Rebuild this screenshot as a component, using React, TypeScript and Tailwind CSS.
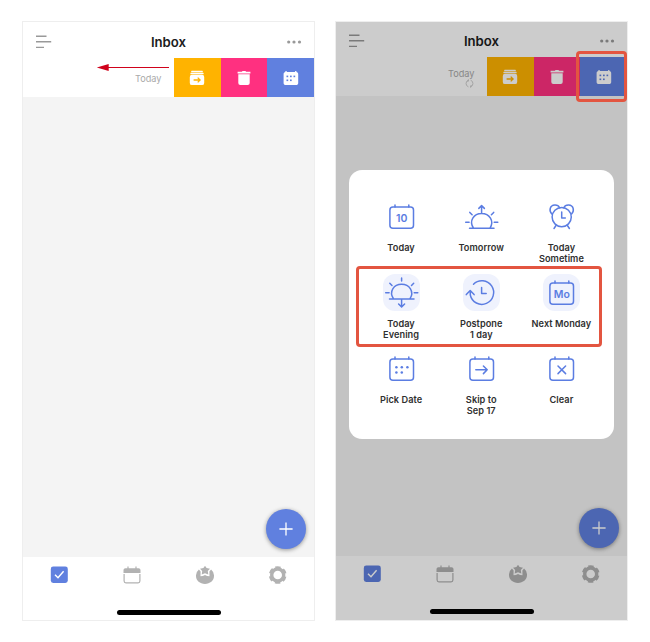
import React from "react";

const stroke = {
  fill: "none",
  stroke: "currentColor",
  strokeWidth: 1.5,
  strokeLinecap: "round" as const,
  strokeLinejoin: "round" as const,
};

function CalendarFrame() {
  return (
    <>
      <rect x="6.900" y="8.900" width="23.600" height="21.400" rx="3" />
      <path d="M12 7v2M25.800 7v2" />
    </>
  );
}

function CalendarText({ label }: { label: string }) {
  return (
    <svg width="37" height="37" viewBox="0 0 37 37" {...stroke}>
      <CalendarFrame />
      <text x="18.800" y="23.700" textAnchor="middle" fill="currentColor" stroke="none" fontSize="10.5" fontWeight="600" fontFamily="Inter, sans-serif">
        {label}
      </text>
    </svg>
  );
}

function Sunrise() {
  return (
    <svg width="37" height="37" viewBox="0 0 37 37" {...stroke}>
      <path d="M6.500 30.300h24.500M10.500 30.100C5.600 23 10.800 15.500 18.600 15.500S31.600 23 27 30.100M18.600 15V7.800M15.800 10.400l2.800-2.800 2.800 2.800M2.700 24.200h3.400M31.200 24.200h3.600M6.800 14.400l2.300 2.400M30.700 14.400l-2.300 2.400" />
    </svg>
  );
}

function Sunset() {
  return (
    <svg width="37" height="37" viewBox="0 0 37 37" {...stroke}>
      <path d="M6.500 24.900h24.500M10.500 24.700C5.600 17.600 10.800 10.300 18.600 10.300S31.600 17.600 27 24.700M18.600 25.200v7.600M15.600 30l3 3 3-3M18.600 4v3M2.700 18.800h3.400M31.200 18.800h3.600M6.800 9.200l2.200 2.300M30.700 9.200l-2.200 2.300" />
    </svg>
  );
}

function AlarmClock() {
  return (
    <svg width="37" height="37" viewBox="0 0 37 37" {...stroke}>
      <circle cx="18.700" cy="19.100" r="9.600" />
      <path d="M8.800 16c-3-3-2.200-8.700 3-9 2.300-.1 4 1 4.800 2.700M28.600 16c3-3 2.200-8.700-3-9-2.300-.1-4 1-4.800 2.700M18.700 14v6h3.600M13 27.500l-2 3M24.400 27.500l2 3" />
    </svg>
  );
}

function Postpone() {
  return (
    <svg width="37" height="37" viewBox="0 0 37 37" {...stroke}>
      <path d="M10.500 10.200A11.800 11.800 0 1 1 7.300 21V17M3.300 20.600l3.900-4 3.900 4M18.600 13.600v5.800h4.600" />
    </svg>
  );
}

function CalendarDots() {
  return (
    <svg width="37" height="37" viewBox="0 0 37 37" {...stroke}>
      <CalendarFrame />
      <g fill="currentColor" stroke="none">
        <circle cx="13.400" cy="17.200" r="1.250" />
        <circle cx="18.800" cy="17.200" r="1.250" />
        <circle cx="24.400" cy="17.200" r="1.250" />
        <circle cx="13.400" cy="22.500" r="1.250" />
        <circle cx="18.800" cy="22.500" r="1.250" />
      </g>
    </svg>
  );
}

function CalendarSkip() {
  return (
    <svg width="37" height="37" viewBox="0 0 37 37" {...stroke}>
      <CalendarFrame />
      <path d="M12.800 19.800h11.400M20.400 16l3.800 3.800-3.800 3.800" />
    </svg>
  );
}

function CalendarClear() {
  return (
    <svg width="37" height="37" viewBox="0 0 37 37" {...stroke}>
      <CalendarFrame />
      <path d="M15 16l7.600 7.600M22.600 16L15 23.600" />
    </svg>
  );
}

function MoveIcon() {
  return (
    <svg width="16" height="16" viewBox="0 0 16 16" fill="white">
      <rect x="2.200" y=".8" width="11.600" height="1.500" rx=".5" />
      <rect x="1.400" y="2.800" width="13.200" height="1.500" rx=".5" />
      <rect x=".8" y="4.800" width="14.400" height="10.300" rx="2.200" />
      <path d="M4.600 10h6.400M8.700 7.600 11.100 10l-2.400 2.400" fill="none" stroke="#ffb300" strokeWidth="1.300" />
    </svg>
  );
}

function TrashIcon() {
  return (
    <svg width="16" height="16" viewBox="0 0 16 16" fill="white">
      <path d="M1.600 1.700h4.200l.8-.8h2.800l.8.800h4.200v1.800H1.600zM2.300 4.200h11.400v8.900a2 2 0 0 1-2 2H4.300a2 2 0 0 1-2-2z" />
    </svg>
  );
}

function ScheduleIcon() {
  return (
    <svg width="16" height="16" viewBox="0 0 16 16" fill="white">
      <path d="M2.400.9h1.300v1.200h8.400V.9h1.300v1.200c1.100.2 1.800 1 1.800 2.100v8.700c0 1.300-.9 2.200-2.200 2.200H2.800C1.500 15.100.6 14.200.6 12.900V4.200c0-1.100.7-1.900 1.800-2.100z" />
      <g fill="#6080df">
        <rect x="3.500" y="5.600" width="1.700" height="1.600" />
        <rect x="7" y="5.600" width="1.700" height="1.600" />
        <rect x="10.500" y="5.600" width="1.700" height="1.600" />
        <rect x="3.500" y="9.500" width="1.700" height="1.600" />
        <rect x="7" y="9.500" width="1.700" height="1.600" />
      </g>
    </svg>
  );
}

function TabBar() {
  return (
    <nav className="flex justify-around pt-[9px] text-[#b2b2b2]">
      <svg width="18" height="18" viewBox="0 0 18 18">
        <rect x=".8" y=".5" width="17" height="16.500" rx="2.400" fill="#6080df" />
        <path d="M5 8.800l3 3 5.600-6.600" fill="none" stroke="white" strokeWidth="1.400" />
      </svg>
      <svg width="18" height="18" viewBox="0 0 18 18" fill="currentColor">
        <path d="M.5 7V4.200c0-1.200.8-2 2-2h1.900V.6h1.200v1.600h6.800V.6h1.200v1.600h1.900c1.200 0 2 .8 2 2V7z" />
        <path d="M1.100 8v7.100c0 1.100.7 1.800 1.800 1.800h12.200c1.100 0 1.800-.7 1.800-1.800V8" fill="none" stroke="currentColor" strokeWidth="1.200" />
      </svg>
      <svg width="18" height="18" viewBox="0 0 18 18" fill="currentColor">
        <path d="M2.900 3.600A9 8.300 0 0 0 0 10.100C0 14.700 4 18 9 18s9-3.300 9-7.900a9 8.300 0 0 0-2.900-6.500L13.400 5.500l.1 4.700-2.400-.2L9 9.100l-2.100.9-2.400.2.100-4.700z" />
        <path d="M9-.2l1.600 2.300 3.400.6-2.200 2.300.5 3.500L9 7.300 5.700 8.500l.5-3.500L4 2.700l3.400-.6z" />
      </svg>
      <svg width="18" height="18" viewBox="0 0 18 18" fill="none" stroke="currentColor">
        <circle cx="8.700" cy="9" r="6" strokeWidth="3.400" />
        <circle cx="8.700" cy="9" r="7.500" strokeWidth="2.700" strokeDasharray="5 2.854" strokeDashoffset="2.500" transform="rotate(-30 8.700 9)" />
      </svg>
    </nav>
  );
}

function Phone({ dimmed = false }: { dimmed?: boolean }) {
  return (
    <div className="relative flex h-[600px] w-[293px] shrink-0 flex-col overflow-hidden border border-[#eeeeee] bg-white">
      <header className={`flex shrink-0 items-center justify-between pr-[12px] pl-[13px] ${dimmed ? "h-[35px] pt-[3px]" : "h-[36px] pt-[4px]"}`}>
        <svg width="16" height="14" viewBox="0 0 16 14" stroke="#999999" strokeWidth="1.4">
          <path d="M0 1.200h10.500M0 6.800h15.200M0 12.400h8" />
        </svg>
        <h1 className="pr-[1px] text-[13.2px] leading-4 font-semibold text-[#1c1c1c]">Inbox</h1>
        <svg width="16" height="4" viewBox="0 0 16 4" fill="#999999">
          <circle cx="2.700" cy="2" r="1.600" />
          <circle cx="8" cy="2" r="1.600" />
          <circle cx="13.500" cy="2" r="1.600" />
        </svg>
      </header>
      <div className="flex h-[39px] shrink-0 items-start">
        <div className={`flex flex-1 flex-col items-end pr-[12.500px] text-[9.200px] leading-3 text-[#aaaaaa] ${dimmed ? "pt-[10.500px]" : "pt-[15px]"}`}>
          <span>Today</span>
          {dimmed && (
            <svg className="-mt-[1px] mr-px" width="9" height="9" viewBox="0 0 9 9" fill="none" stroke="#c0c0c0" strokeWidth=".8">
              <path d="M3.400 1.200a3.500 3.500 0 0 0 0 6.600M5.600 7.800a3.500 3.500 0 0 0 0-6.600M3.400.4v1.800H2.200M5.600 8.600V6.800h1.200" />
            </svg>
          )}
        </div>
        <div className="mt-[0.400px] flex h-[38.600px] w-[140px] *:flex *:flex-1 *:items-center *:justify-center">
          <div className="bg-[#ffb300]"><MoveIcon /></div>
          <div className="bg-[#ff3080]"><TrashIcon /></div>
          <div className="bg-[#6080df]"><ScheduleIcon /></div>
        </div>
      </div>
      <main className="flex h-[460px] shrink-0 items-end justify-end bg-[#f4f4f4] pr-[8px] pb-[8.500px]">
        <button className="flex size-[40px] items-center justify-center rounded-full bg-[#6080df] shadow-[0_1px_4px_rgba(0,0,0,0.4)]">
          <svg width="14" height="14" viewBox="0 0 14 14" stroke="white" strokeWidth="1.300">
            <path d="M7 .4v13.200M.4 7h13.200" />
          </svg>
        </button>
      </main>
      <TabBar />
      <div className="mx-auto mt-[26px] h-[4.500px] w-[104px] shrink-0 rounded-full bg-black" />
    </div>
  );
}

const actions: { icon: React.ReactNode; label: string[]; active?: boolean }[] = [
  { icon: <CalendarText label="10" />, label: ["Today"] },
  { icon: <Sunrise />, label: ["Tomorrow"] },
  { icon: <AlarmClock />, label: ["Today", "Sometime"] },
  { icon: <Sunset />, label: ["Today", "Evening"], active: true },
  { icon: <Postpone />, label: ["Postpone", "1 day"], active: true },
  { icon: <CalendarText label="Mo" />, label: ["Next Monday"], active: true },
  { icon: <CalendarDots />, label: ["Pick Date"] },
  { icon: <CalendarSkip />, label: ["Skip to", "Sep 17"] },
  { icon: <CalendarClear />, label: ["Clear"] },
];

function ScheduleDialog() {
  return (
    <div className="absolute top-[149px] left-[14px] h-[268.500px] w-[265px] rounded-[13px] bg-white pt-[28px] pr-[12.500px] pl-[12px]">
      <div className="grid grid-cols-3 auto-rows-[76px]">
        {actions.map((a) => (
          <div key={a.label.join(" ")} className="flex flex-col items-center">
            <div className={`size-[37px] rounded-[12px] text-[#5b7de2] ${a.active ? "bg-[#eff2fd]" : ""}`}>{a.icon}</div>
            <div className="mt-[7px] text-center text-[9.200px] leading-[11px] font-semibold tracking-[0.05px] whitespace-nowrap text-[#303030]">
              {a.label.map((line) => (
                <div key={line}>{line}</div>
              ))}
            </div>
          </div>
        ))}
      </div>
      <div className="absolute top-[96px] left-[7px] h-[81px] w-[246px] rounded-[4px] border-3 border-[#e35540]" />
    </div>
  );
}

export default function App() {
  return (
    <div className="flex h-[642px] w-[650px] gap-[20px] overflow-hidden bg-white pt-[21px] pl-[22px] font-[Inter,sans-serif]">
      <div className="relative h-[600px]">
        <Phone />
        <svg className="absolute top-[42px] left-[74px]" width="74" height="9" viewBox="0 0 74 9">
          <path d="M11 4.500h62" stroke="#d0021b" strokeWidth="1" />
          <path d="M.8 4.500 12.700 1v7z" fill="#d0021b" />
        </svg>
      </div>
      <div className="relative h-[600px]">
        <Phone dimmed />
        <div className="absolute inset-px bg-black/20" />
        <ScheduleDialog />
        <div className="absolute top-[30px] left-[240.500px] h-[51px] w-[51.500px] rounded-[4px] border-3 border-[#e35540]" />
      </div>
    </div>
  );
}
